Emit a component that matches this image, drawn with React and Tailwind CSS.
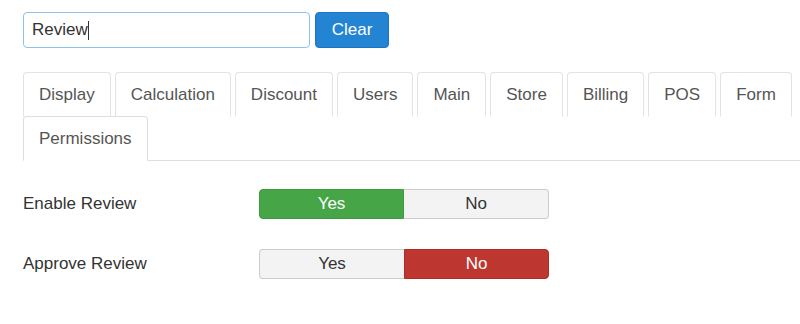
const tabs = ["Display", "Calculation", "Discount", "Users", "Main", "Store", "Billing", "POS", "Form", "Permissions"];

function Toggle({ value }) {
  const yes = value === "yes";
  return (
    <div className="flex h-[30px] w-[290px] text-[17px]">
      <button
        className={
          yes
            ? "w-1/2 rounded-l-[4px] border border-[#3f9a3f] bg-[#46a546] text-white"
            : "w-1/2 rounded-l-[4px] border border-r-0 border-[#cccccc] bg-[#f3f3f3] text-[#333]"
        }
      >
        Yes
      </button>
      <button
        className={
          yes
            ? "w-1/2 rounded-r-[4px] border border-l-0 border-[#cccccc] bg-[#f3f3f3] text-[#333]"
            : "w-1/2 rounded-r-[4px] border border-[#a9302a] bg-[#bd362f] text-white"
        }
      >
        No
      </button>
    </div>
  );
}

export default function App() {
  return (
    <div className="min-h-[324px] bg-white pl-[23px] pt-[12px] text-[#333]" style={{ fontFamily: '"Liberation Sans", Arial, sans-serif' }}>
      {/* search bar */}
      <div className="flex items-center gap-[5px]">
        <div className="flex h-[36px] w-[287px] items-center rounded-[4px] border border-[#8cc3ec] px-[8px] text-[17px] text-[#333]">
          Review<span className="inline-block h-[19px] w-px bg-[#333]" />
        </div>
        <button className="h-[36px] w-[74px] rounded-[4px] border border-[#1f75bd] bg-[#2384d3] text-[17px] text-white">
          Clear
        </button>
      </div>

      {/* tabs */}
      <ul className="mt-[24px] flex flex-wrap border-b border-[#dddddd]">
        {tabs.map((t) => {
          const active = t === "Permissions";
          return (
            <li key={t} className="-mb-px mr-[4px]">
              <a
                className={
                  "flex h-[45px] items-center rounded-t-[4px] border border-b-transparent px-[15px] text-[17px] " +
                  (active ? "border-[#dddddd] bg-white text-[#555]" : "border-[#e3e3e3] bg-white text-[#555]")
                }
              >
                {t}
              </a>
            </li>
          );
        })}
      </ul>

      {/* settings */}
      <div className="mt-[28px] flex flex-col gap-[30px] text-[17px]">
        <div className="flex items-center">
          <span className="w-[236px]">Enable Review</span>
          <Toggle value="yes" />
        </div>
        <div className="flex items-center">
          <span className="w-[236px]">Approve Review</span>
          <Toggle value="no" />
        </div>
      </div>
    </div>
  );
}
